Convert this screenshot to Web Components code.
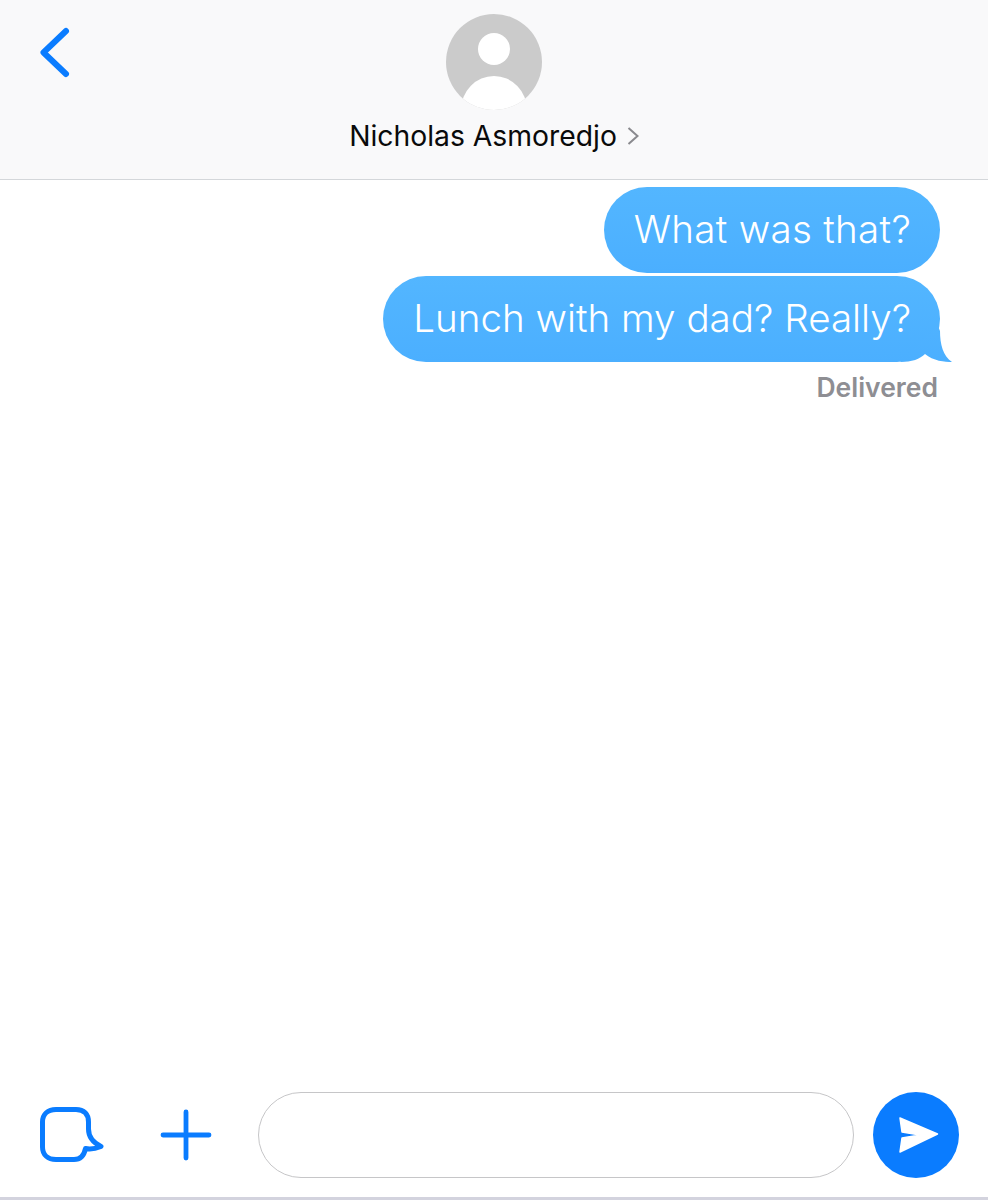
<!DOCTYPE html>
<html>
<head>
<meta charset="utf-8">
<title>Messages</title>
<style>
html, body { margin: 0; padding: 0; background: #fff; }
body { font-family: Inter, "Liberation Sans", sans-serif; }
</style>
</head>
<body>
<chat-screen>
    <chat-header slot="header" name="Nicholas Asmoredjo"></chat-header>
    <chat-bubble style="--track:.3px">What was that?</chat-bubble>
    <chat-bubble tail>Lunch with my dad? Really?</chat-bubble>
    <chat-status>Delivered</chat-status>
    <chat-composer slot="footer"></chat-composer>
</chat-screen>
<script>
"use strict"
{
    class ChatScreen extends HTMLElement {
        constructor() {
            super();
            const shadow = this.attachShadow({ mode: 'open' });
            shadow.innerHTML = `
<style>
:host { display: flex; flex-direction: column; height: 1200px; overflow: hidden; }
main { flex: 1; display: flex; flex-direction: column; align-items: flex-end; gap: 3px; padding: 7px 48px 0 0; }
</style>
<slot name="header"></slot>
<main><slot></slot></main>
<slot name="footer"></slot>
`;
        }
    }
    class ChatHeader extends HTMLElement {
        constructor() {
            super();
            const shadow = this.attachShadow({ mode: 'open' });
            shadow.innerHTML = `
<style>
:host { display: block; background: #f9f9fa; border-bottom: 1px solid #d4d7da; }
.bar { display: grid; grid-template-columns: 1fr auto 1fr; height: 179px; box-sizing: border-box; padding-top: 14px; }
.back { display: block; margin: 12px 0 0 36px; }
.who { display: flex; flex-direction: column; align-items: center; }
.avatar { display: block; }
.name { display: flex; align-items: center; gap: 10px; margin-top: 10px; font: 400 28.300px/32px Inter, "Liberation Sans", sans-serif; color: #0a0a0a; }
</style>
<div class="bar">
    <svg class="back" width="40" height="56" viewBox="0 0 40 56" fill="none">
        <path d="M30 5 7.500 26.500 30 48" stroke="#0a7cff" stroke-width="6" stroke-linecap="round" stroke-linejoin="round"/>
    </svg>
    <div class="who">
        <svg class="avatar" width="96" height="96" viewBox="0 0 96 96">
            <defs><clipPath id="c"><circle cx="48" cy="48" r="48"/></clipPath></defs>
            <circle cx="48" cy="48" r="48" fill="#cbcbcb"/>
            <circle cx="48" cy="35" r="16" fill="#fff"/>
            <ellipse cx="48" cy="96" rx="33" ry="34" fill="#fff" clip-path="url(#c)"/>
        </svg>
        <div class="name"><span id="name"></span>
            <svg width="12" height="18" viewBox="0 0 12 18" fill="none"><path d="M1.500 1 10.500 9 1.500 17" stroke="#8a8a8e" stroke-width="2"/></svg>
        </div>
    </div>
    <div></div>
</div>
`;
            shadow.getElementById('name').textContent = this.getAttribute('name');
        }
    }
    class ChatBubble extends HTMLElement {
        constructor() {
            super();
            const shadow = this.attachShadow({ mode: 'open' });
            shadow.innerHTML = `
<style>
:host { display: block; position: relative; height: 86px; box-sizing: border-box; padding: 0 29px 0 30px; border-radius: 43px;
    background: linear-gradient(#53b6ff, #4bafff); color: #fff; font: 300 38.600px/84px Inter, "Liberation Sans", sans-serif;
    letter-spacing: var(--track, 0); white-space: nowrap; }
svg { display: none; position: absolute; right: -12px; bottom: 0; }
:host([tail]) svg { display: block; }
</style>
<slot></slot>
<svg width="52" height="36" viewBox="0 0 52 36">
    <defs><linearGradient id="t" x1="0" y1="0" x2="0" y2="1"><stop offset="0" stop-color="#4fb2ff"/><stop offset="1" stop-color="#4bafff"/></linearGradient></defs>
    <path d="M38 0 40 5C40 18 43 30 52 36 45 36 33 35 25 28 20 33 12 36 0 36Z" fill="url(#t)"/>
</svg>
`;
        }
    }
    class ChatStatus extends HTMLElement {
        constructor() {
            super();
            const shadow = this.attachShadow({ mode: 'open' });
            shadow.innerHTML = `
<style>
:host { display: block; margin: 7px 2px 0 0; font: 600 26.500px/30px Inter, "Liberation Sans", sans-serif; color: #8e8e93; }
</style>
<slot></slot>
`;
        }
    }
    class ChatComposer extends HTMLElement {
        constructor() {
            super();
            const shadow = this.attachShadow({ mode: 'open' });
            shadow.innerHTML = `
<style>
:host { display: block; border-bottom: 3px solid #d3d3de; }
.row { display: flex; align-items: center; padding: 0 29px 19px 38px; }
.icon { display: block; flex: none; }
.plus { margin-left: 52px; }
.field { flex: 1; height: 86px; box-sizing: border-box; margin: 0 19px 0 44px; border: 1.500px solid #c6c6c8; border-radius: 43px; }
.send { display: block; flex: none; }
</style>
<div class="row">
    <svg class="icon" width="68" height="60" viewBox="0 0 68 60" fill="none">
        <path d="M18 4.500H38C46 4.500 50.500 9 50.500 17V24C50.500 32 56 38 63 41.500 58 43.500 52 44.500 47.500 43.500 46 51 42 54.500 36 54.500H18C10 54.500 4.500 50 4.500 42V17C4.500 9 10 4.500 18 4.500Z" stroke="#0a7cff" stroke-width="5" stroke-linejoin="round"/>
    </svg>
    <svg class="icon plus" width="56" height="56" viewBox="0 0 56 56" fill="none">
        <path d="M28 5V51M5 28H51" stroke="#0a7cff" stroke-width="4.800" stroke-linecap="round"/>
    </svg>
    <div class="field"></div>
    <svg class="send" width="86" height="86" viewBox="0 0 86 86">
        <circle cx="43" cy="43" r="43" fill="#0a7cff"/>
        <path d="M27 26 64.500 42 27 60 29 46 47 43 29 40Z" fill="#fff" stroke="#fff" stroke-width="1.500" stroke-linejoin="round"/>
    </svg>
</div>
`;
        }
    }
    customElements.define('chat-screen', ChatScreen);
    customElements.define('chat-header', ChatHeader);
    customElements.define('chat-bubble', ChatBubble);
    customElements.define('chat-status', ChatStatus);
    customElements.define('chat-composer', ChatComposer);
}
</script>
</body>
</html>
